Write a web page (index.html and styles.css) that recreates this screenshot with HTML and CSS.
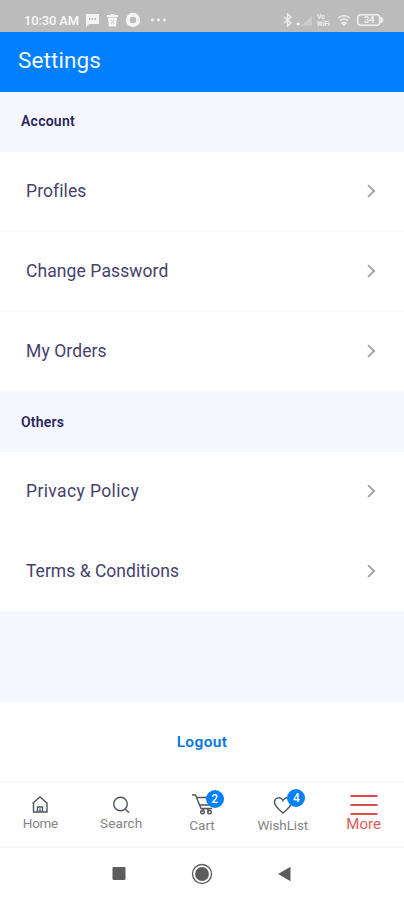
FILE: index.html
```
<!DOCTYPE html>
<html lang="en">
<head>
<meta charset="utf-8">
<title>Settings</title>
<link rel="stylesheet" href="styles.css">
</head>
<body>
<div class="status">
  <span class="time">10:30 AM</span>
  <svg class="left-icons" width="84" height="16" viewBox="0 0 84 16" fill="#f4f4f4">
    <path d="M1 2h13v10H4l-3 3z"/><path d="M4 7h1.500M6.700 7h1.500M9.400 7h1.500" stroke="#aaa" stroke-width="1.500"/>
    <path d="M22 3h3l1-1h3l1 1h3v2H22zM23 5.500h9l-1 9h-7z"/><path d="M26 8l3 4M29 8l-3 4" stroke="#ccc" stroke-width="1"/>
    <circle cx="48" cy="8" r="5.200" fill="none" stroke="#f4f4f4" stroke-width="4"/>
    <circle cx="67.500" cy="8" r="1.400"/><circle cx="73.500" cy="8" r="1.400"/><circle cx="79.500" cy="8" r="1.400"/>
  </svg>
  <svg class="right-icons" width="104" height="16" viewBox="0 0 104 16" fill="none" stroke="#eee">
    <path d="M1 5l7 6-3.500 3V2L8 5l-7 6" stroke-width="1.300"/>
    <path d="M14 13h2.500v-2H14z" fill="#fff" stroke="#fff" stroke-width=".5"/><path d="M18 13.500h11V4z" fill="#ccc" stroke="none"/>
    <path d="M55 6q6-4.500 12 0M57 8.500q4-3 8 0M59 11q2-1.500 4 0l-2 2z" stroke-width="1.400"/>
    <rect x="74.700" y="2.700" width="22" height="10.500" rx="3" stroke-width="1.600"/><path d="M98 5q4 3 0 6z" fill="#eee"/>
    <g class="tiny" fill="#eee" stroke="none"><text x="34" y="7">Vo</text><text x="34" y="14">WiFi</text><text class="charge" x="81" y="11">34</text></g>
  </svg>
</div>
<header><h1>Settings</h1></header>
<h2 class="account">Account</h2>
<div class="row"><span class="w-profiles">Profiles</span><i class="chev"></i></div>
<div class="row"><span class="w-password">Change Password</span><i class="chev"></i></div>
<div class="row"><span class="w-orders">My Orders</span><i class="chev"></i></div>
<h2 class="others">Others</h2>
<div class="row"><span class="w-privacy">Privacy Policy</span><i class="chev"></i></div>
<div class="row"><span class="w-terms">Terms &amp; Conditions</span><i class="chev"></i></div>
<div class="gap"></div>
<div class="logout"><span>Logout</span></div>
<nav>
  <div class="tab home"><svg width="22" height="20" viewBox="0 0 22 20"><path d="M3.500 8.500L11 2l7.500 6.500M4.500 8v9h13.500V8M8.500 17v-5h5v5M11 13.500v3.500"/></svg><span>Home</span></div>
  <div class="tab search"><svg width="22" height="20" viewBox="0 0 22 20"><circle cx="10.500" cy="9" r="6.800"/><path d="M15.300 14l3.700 3.700"/></svg><span>Search</span></div>
  <div class="tab cart"><svg width="28" height="24" viewBox="0 0 28 24"><path d="M4 2h3.500L13 15.500h11M8.500 4.500H24l-2.500 7.500H12"/><path d="M16 15.500l-2 3M19 15.500l2 3"/><circle cx="14.500" cy="19" r="1.800"/><circle cx="21.500" cy="19" r="1.800"/></svg><b>2</b><span>Cart</span></div>
  <div class="tab wish"><svg width="24" height="22" viewBox="0 0 24 22"><path d="M12 18C8 14.500 3.500 11 3.500 7.500C3.500 2.500 9.500 1 12 5.500C14.500 1 20.500 2.500 20.500 7.500C20.500 11 16 14.500 12 18z"/></svg><b>4</b><span>WishList</span></div>
  <div class="tab more"><svg width="28" height="22" viewBox="0 0 28 22"><path d="M.5 2h27M.5 11h27M.5 20h27"/></svg><span>More</span></div>
</nav>
<footer>
  <svg width="404" height="53" viewBox="0 0 404 53" fill="#5c5c5c"><rect x="112.500" y="20" width="13" height="13" rx="1"/><circle cx="202" cy="27" r="9.500" fill="none" stroke="#5c5c5c" stroke-width="1.300"/><circle cx="202" cy="27" r="6.900"/><path d="M278 27L290.500 19.700v14.600z"/></svg>
</footer>
</body>
</html>
```
FILE: styles.css
```
* { box-sizing: border-box; }
body { margin: 0; width: 404px; height: 900px; overflow: hidden; background: #fefefe; font-family: Roboto, "Liberation Sans", sans-serif; color: #46426b; }
svg { display: block; }
.status { height: 32px; background: #bbb; display: flex; align-items: center; padding: 8px 0 0 24px; color: #f8f8f8; }
.time { width: 61px; font-size: 13px; font-weight: 500; letter-spacing: -.15px; white-space: nowrap; }
.right-icons { margin-left: 114px; }
.tiny { font-size: 6.500px; font-weight: 700; }
.charge { font-size: 9px; }
header { height: 60px; background: #0080ff; padding: 13px 18px; }
h1 { margin: 0; font-size: 22.500px; line-height: 30px; font-weight: 400; letter-spacing: .1px; color: #f2f8ff; }
h2 { margin: 0; height: 60px; padding-left: 21px; background: #f5f6ff; font-size: 14px; line-height: 59px; font-weight: 600; color: #2b2659; }
.account { letter-spacing: .25px; }
.others { letter-spacing: .2px; line-height: 60px; }
.row { height: 80px; display: flex; align-items: center; justify-content: space-between; padding: 0 31px 2px 26px; font-size: 17.500px; border-bottom: 1px solid #fbfbfb; }
.w-profiles, .w-orders { letter-spacing: .1px; }
.w-password { letter-spacing: .1px; }
.w-privacy { letter-spacing: .38px; }
.w-terms { letter-spacing: .02px; }
.chev { width: 9.500px; height: 9.500px; margin-top: 1px; border: solid #a2a2a2; border-width: 2px 2px 0 0; transform: rotate(45deg) scale(.92); }
.gap { height: 90px; background: #f5f6ff; }
.logout { height: 79px; display: flex; align-items: center; justify-content: center; padding-top: 1px; font-size: 15.500px; letter-spacing: .35px; font-weight: 600; color: #0878dc; }
nav { height: 67px; display: grid; grid-template-columns: repeat(5, 1fr); border-top: 1px solid #f9f9f9; border-bottom: 2px solid #f6f6f6; }
.tab { position: relative; display: flex; flex-direction: column; align-items: center; font-size: 13.500px; line-height: 16px; color: #858585; padding-top: 13px; }
.tab svg { fill: none; stroke: #50545c; stroke-width: 1.400; }
.tab b { position: absolute; width: 18px; height: 18px; border-radius: 50%; background: #0080ff; color: #fff; font-size: 12px; font-weight: 500; line-height: 18px; text-align: center; }
.home span { letter-spacing: -.3px; }
.search span { letter-spacing: .15px; }
.wish span { letter-spacing: -.1px; }
.cart { padding-top: 11px; }
.cart b { left: 44px; top: 8px; }
.wish b { left: 45px; top: 7px; }
.tab.more { color: #dd5c5a; font-size: 15px; padding-top: 12px; }
.more svg { stroke: #dd4b4b; stroke-width: 2; }
footer { height: 52px; }
footer svg { margin-top: -1px; }
```
